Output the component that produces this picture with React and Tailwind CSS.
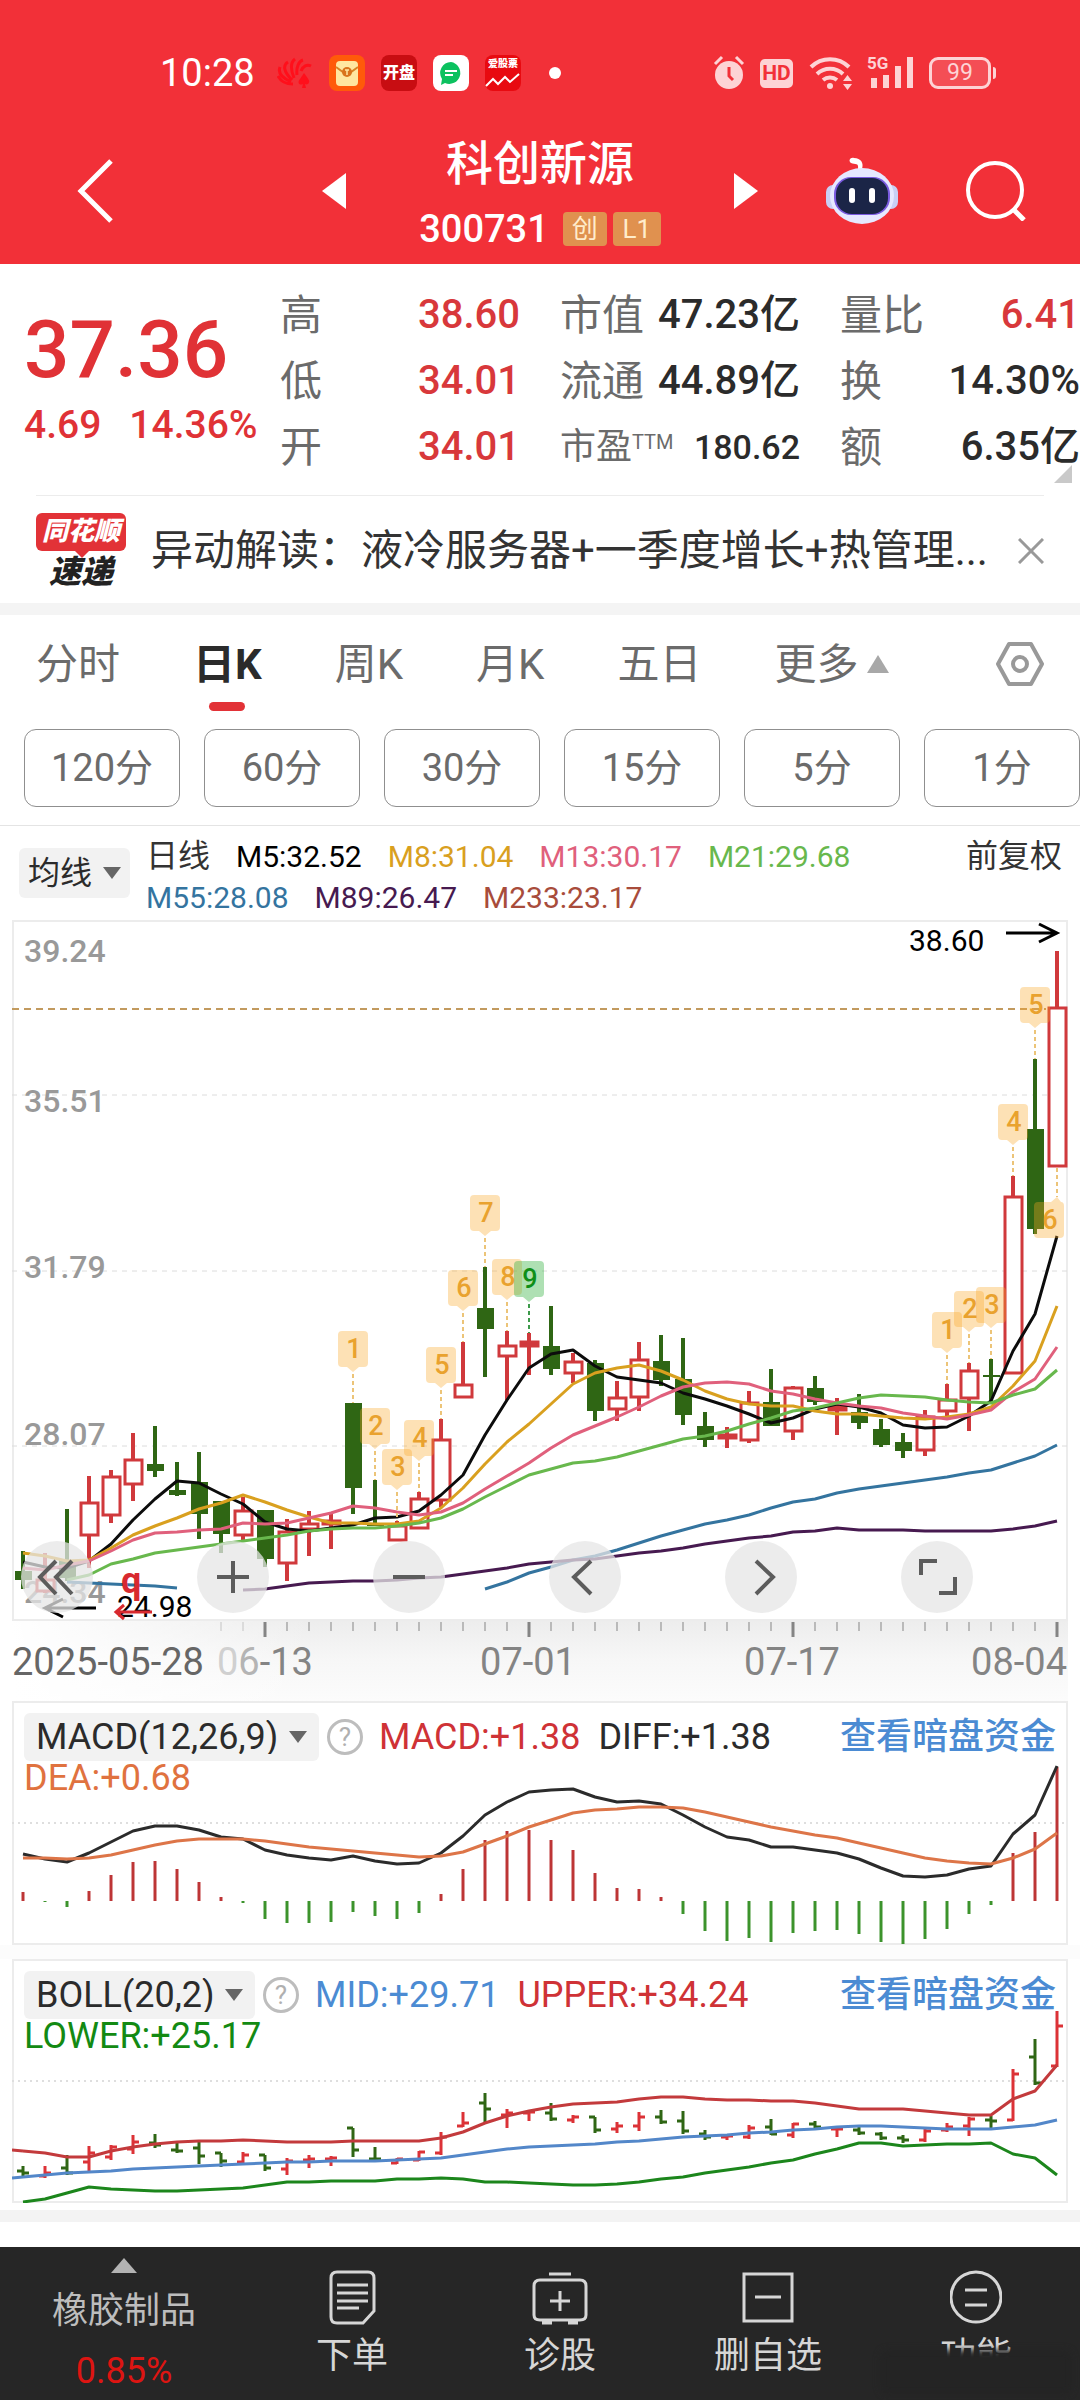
import React, { useState } from "react";

const RED = "#d0393c";
const GREEN = "#2f6614";
const STEP = 22;

const xAt = (i) => 11 + STEP * i;

// [high, body top, body bottom, low, rising]
const candles = [
  [631, 651, 660, 669, 0], [633, 660, 671, 673, 1], [589, 640, 658, 661, 0], [556, 583, 615, 648, 1],
  [550, 557, 595, 603, 1], [513, 540, 564, 581, 1], [506, 544, 551, 557, 0], [542, 570, 575, 576, 0],
  [532, 562, 594, 619, 0], [581, 581, 614, 633, 0], [577, 591, 615, 620, 1], [590, 590, 639, 647, 0],
  [599, 612, 643, 661, 1], [591, 604, 609, 636, 1], [593, 601, 604, 629, 1], [483, 483, 568, 594, 0],
  [560, 603, 606, 606, 0], [601, 606, 620, 621, 1], [572, 579, 608, 608, 1], [499, 520, 580, 587, 1],
  [422, 465, 477, 477, 1], [347, 388, 409, 457, 0], [411, 426, 436, 480, 1], [413, 422, 426, 455, 1],
  [386, 426, 449, 455, 0], [433, 442, 453, 463, 1], [440, 443, 491, 501, 0], [461, 478, 489, 501, 1],
  [422, 440, 477, 491, 1], [415, 441, 460, 466, 0], [418, 459, 495, 505, 0], [492, 506, 520, 527, 0],
  [507, 515, 518, 528, 1], [471, 483, 520, 523, 1], [449, 482, 506, 506, 0], [466, 468, 511, 520, 1],
  [456, 468, 482, 485, 0], [478, 487, 490, 515, 1], [474, 492, 503, 509, 0], [499, 509, 525, 527, 0],
  [513, 522, 531, 538, 0], [490, 497, 530, 536, 1], [464, 480, 491, 497, 1], [443, 451, 478, 511, 1],
  [439, 455, 457, 483, 0], [256, 277, 453, 453, 1], [139, 209, 309, 314, 0], [31, 88, 246, 246, 1],
];

const M5 = [642, 647, 648, 641, 624, 600, 579, 561, 563, 574, 584, 602, 609, 611, 608, 605, 598, 597, 591, 575, 555, 515, 480, 448, 434, 430, 446, 457, 460, 463, 473, 479, 486, 494, 503, 498, 489, 484, 487, 493, 505, 508, 507, 496, 481, 431, 394, 316];
const M8 = [633, 636, 641, 640, 628, 615, 606, 598, 589, 583, 575, 582, 590, 597, 603, 603, 604, 604, 601, 588, 568, 544, 522, 504, 484, 464, 453, 448, 445, 451, 460, 471, 479, 484, 486, 486, 491, 494, 494, 496, 498, 499, 497, 494, 487, 466, 441, 386];
const M13 = [648, 650, 645, 641, 631, 620, 613, 612, 610, 609, 603, 604, 603, 598, 593, 586, 588, 592, 595, 592, 583, 569, 556, 543, 528, 515, 506, 497, 487, 476, 467, 463, 462, 464, 471, 474, 479, 483, 486, 488, 493, 496, 499, 495, 490, 472, 459, 427];
const M21 = [660, 655, 644, 639, 633, 630, 627, 624, 621, 618, 615, 611, 609, 608, 608, 606, 603, 598, 589, 577, 566, 555, 549, 543, 541, 537, 531, 525, 519, 516, 511, 504, 498, 491, 488, 483, 478, 475, 476, 477, 480, 482, 483, 475, 469, 450];
const M55 = [669, 662, 653, 647, 640, 636, 630, 623, 616, 610, 604, 600, 595, 588, 582, 579, 573, 569, 566, 563, 560, 557, 553, 550, 543, 536, 525];
const M89 = [670, 669, 666, 663, 662, 661, 661, 660, 658, 657, 654, 651, 648, 644, 642, 640, 639, 636, 633, 631, 628, 624, 621, 618, 616, 612, 611, 608, 610, 610, 610, 611, 611, 611, 611, 609, 606, 601];

// [candle index, label]
const flags = [
  [15, 1], [16, 2], [17, 3], [18, 4], [19, 5], [20, 6], [21, 7], [22, 8], [23, 9],
  [42, 1], [43, 2], [44, 3], [45, 4], [46, 5],
];

const macdBars = [191, 201, 206, 190, 174, 161, 160, 168, 181, 196, 202, 218, 222, 222, 221, 211, 215, 218, 212, 193, 168, 139, 130, 129, 139, 149, 172, 187, 188, 196, 213, 230, 240, 237, 241, 232, 230, 229, 233, 241, 243, 238, 228, 213, 204, 152, 131, 66];
const DIFF = [153, 158, 161, 152, 141, 130, 125, 125, 129, 136, 138, 149, 154, 157, 159, 155, 160, 163, 162, 152, 135, 114, 101, 91, 89, 88, 96, 101, 100, 103, 114, 126, 136, 139, 146, 146, 149, 152, 158, 167, 175, 176, 174, 168, 165, 133, 114, 65];
const DEA = [157, 157, 158, 157, 154, 149, 144, 140, 138, 138, 138, 140, 143, 146, 148, 150, 152, 154, 156, 155, 151, 143, 135, 126, 119, 112, 109, 108, 106, 106, 107, 111, 116, 121, 126, 130, 134, 137, 142, 147, 152, 157, 160, 162, 163, 157, 148, 132];

const UPPER = [192, 194, 198, 198, 192, 188, 185, 183, 182, 182, 181, 182, 183, 183, 183, 182, 182, 182, 182, 179, 173, 164, 157, 152, 148, 145, 144, 143, 140, 138, 138, 140, 141, 141, 142, 142, 144, 147, 150, 150, 150, 152, 154, 156, 156, 140, 132, 106];
const MID = [218, 216, 214, 213, 212, 210, 209, 208, 207, 206, 205, 204, 203, 203, 202, 202, 202, 201, 200, 199, 196, 193, 190, 188, 187, 186, 185, 183, 182, 180, 178, 177, 176, 174, 173, 171, 170, 168, 167, 167, 168, 169, 170, 170, 170, 168, 166, 161];
const LOWER = [243, 240, 234, 228, 230, 231, 232, 232, 231, 230, 229, 226, 223, 223, 222, 222, 222, 220, 220, 219, 220, 223, 223, 224, 225, 226, 226, 225, 223, 220, 218, 214, 211, 208, 204, 201, 195, 190, 184, 184, 187, 186, 185, 185, 184, 195, 199, 216];

const Line = ({ data, from = 0, color, width = 3 }) => (
  <polyline
    points={data.map((y, i) => `${xAt(i + from)},${y}`).join(" ")}
    fill="none"
    stroke={color}
    strokeWidth={width}
    strokeLinejoin="round"
  />
);

const Triangle = ({ className, dir = "down" }) => (
  <svg viewBox="0 0 20 14" preserveAspectRatio="none" className={className} aria-hidden="true">
    <path d={dir === "down" ? "M0 0H20L10 14Z" : "M0 14H20L10 0Z"} fill="currentColor" />
  </svg>
);

const StatusBar = () => (
  <div className="flex items-center pt-[54px] pl-[160px] pr-[84px] h-[92px]">
    <span className="text-[38px] leading-10 w-[117px]">10:28</span>
    <svg viewBox="0 0 36 36" className="w-9 h-9 mr-4" fill="none" stroke="#ff0f1b" strokeWidth="3">
      <path d="M16 29C6 29 3 25 1 21M14 27C3 22 1 17 3 12M15 25C6 16 6 10 11 7M17 23C13 13 14 7 18 4M20 20C19 12 22 6 26 5M24 16C26 11 30 9 34 11" />
      <path d="M27 18C31 24 34 26 31 29C29 30 28 29 28 29L29 33H25L26 29C22 31 20 27 23 24Z" fill="#ff0f1b" stroke="none" />
    </svg>
    <svg viewBox="0 0 36 36" className="w-9 h-9 mr-4">
      <rect width="36" height="36" rx="8" fill="#ff5a0a" />
      <rect x="7" y="6" width="22" height="25" rx="4" fill="#ffe6a0" />
      <path d="M7 12L18 20L29 12" fill="none" stroke="#d98225" strokeWidth="2" />
      <circle cx="18" cy="17" r="5" fill="#d9731c" />
      <path d="M16 15H20M18 15V20" stroke="#ffe6a0" strokeWidth="1.5" />
    </svg>
    <span className="w-9 h-9 mr-4 rounded-lg bg-[#c80d12] text-[16px] leading-9 font-black text-center">开盘</span>
    <svg viewBox="0 0 36 36" className="w-9 h-9 mr-4">
      <rect width="36" height="36" rx="8" fill="#fff" />
      <path d="M18 7A11 11 0 1 1 12 28L8 30L9 24A11 11 0 0 1 18 7Z" fill="#0bc15f" />
      <path d="M12 16H24M12 20H20" stroke="#fff" strokeWidth="2" />
    </svg>
    <span className="flex flex-col items-center w-9 h-9 mr-[28px] rounded-lg bg-[#e80a10]">
      <span className="text-[10px] leading-[18px] font-black">爱股票</span>
      <svg viewBox="0 0 36 16" className="w-9 h-4" fill="none" stroke="#fff" strokeWidth="2">
        <path d="M1 13L8 6L13 11L20 4L25 9L34 1" />
      </svg>
    </span>
    <span className="w-3 h-3 rounded-full bg-white" />

    <div className="flex items-center ml-auto text-[#fdd3d5]">
      <svg viewBox="0 0 32 36" className="w-8 h-9 mr-[15px]" fill="none" stroke="currentColor" strokeWidth="3">
        <path d="M2 9L9 2M30 9L23 2" />
        <circle cx="16" cy="20" r="14" fill="currentColor" stroke="none" />
        <path d="M16 12V21L20 25" stroke="#f23038" />
      </svg>
      <span className="w-[33px] h-[29px] mr-4 rounded-[5px] bg-[#fdd3d5] text-[#f23038] text-[21px] leading-[29px] font-bold text-center">HD</span>
      <svg viewBox="0 0 46 36" className="w-[46px] h-9 mr-3" fill="none" stroke="currentColor" strokeWidth="4">
        <path d="M2 12A27 27 0 0 1 40 12M8 19A19 19 0 0 1 34 19M14 25A11 11 0 0 1 28 25" />
        <circle cx="21" cy="31" r="3" fill="currentColor" stroke="none" />
        <path d="M34 26L38.500 20L43 26ZM34 29L38.500 35L43 29Z" fill="currentColor" stroke="none" />
      </svg>
      <div className="relative w-12 h-9 mr-[14px]">
        <span className="absolute left-0 top-0 text-[17px] leading-4 font-bold">5G</span>
        <svg viewBox="0 0 48 36" className="w-12 h-9" fill="currentColor">
          <path d="M4 23h6v10H4zM16 20h6v13h-6zM28 11h6v22h-6zM40 2h6v31h-6z" />
        </svg>
      </div>
      <span className="w-[62px] h-8 rounded-[9px] border-[3px] border-[#fdd3d5] bg-white/15 text-[23px] leading-[26px] text-center">99</span>
      <span className="w-[3px] h-3 ml-[2px] rounded-r bg-[#fdd3d5]" />
    </div>
  </div>
);

const Robot = () => (
  <svg viewBox="0 0 72 68" className="w-[72px] h-[68px]">
    <path d="M32 12C33 5 29 8 25 6C22 4 24 0 28 1C35 1 38 6 36 12Z" fill="#fff" />
    <rect x="0" y="28" width="14" height="24" rx="7" fill="#c9cff5" />
    <rect x="58" y="28" width="14" height="24" rx="7" fill="#c9cff5" />
    <ellipse cx="36" cy="39" rx="32" ry="28" fill="#e6e8ff" />
    <rect x="8" y="20" width="56" height="38" rx="17" fill="#7a5be0" />
    <rect x="10" y="21" width="52" height="36" rx="16" fill="#1b2547" />
    <rect x="23" y="31" width="6" height="15" rx="3" fill="#fff" />
    <rect x="43" y="31" width="6" height="15" rx="3" fill="#fff" />
  </svg>
);

const Header = () => (
  <header className="bg-[#f23038] text-white">
    <StatusBar />
    <div className="flex items-center gap-[68px] pt-[42px] pb-[17px] pl-[77px] pr-[54px]">
      <button aria-label="返回">
        <svg viewBox="0 0 36 64" className="w-9 h-16" fill="none" stroke="currentColor" strokeWidth="5">
          <path d="M34 2L4 32L34 62" />
        </svg>
      </button>
      <div className="flex items-center gap-[74px] ml-auto">
        <button aria-label="上一只">
          <svg viewBox="0 0 24 36" className="w-6 h-9"><path d="M24 0V36L0 18Z" fill="currentColor" /></svg>
        </button>
        <div className="flex flex-col items-center w-60">
          <h1 className="text-[47px] leading-[60px] font-medium whitespace-nowrap">科创新源</h1>
          <div className="flex items-center gap-[6px] mt-[17px] h-9">
            <span className="text-[38px] leading-9 mr-2 font-medium">300731</span>
            <span className="w-11 h-[34px] rounded bg-[#e0914f] text-[#ffeccb] text-[26px] leading-[34px] text-center">创</span>
            <span className="w-12 h-[34px] rounded bg-[#e0914f] text-[#ffeccb] text-[26px] leading-[34px] text-center">L1</span>
          </div>
        </div>
        <button aria-label="下一只">
          <svg viewBox="0 0 24 36" className="w-6 h-9"><path d="M0 0V36L24 18Z" fill="currentColor" /></svg>
        </button>
      </div>
      <button aria-label="智能助手"><Robot /></button>
      <button aria-label="搜索">
        <svg viewBox="0 0 60 60" className="w-[60px] h-[60px]" fill="none" stroke="currentColor" strokeWidth="4">
          <circle cx="29" cy="29" r="27" />
          <path d="M47 48L58 59" strokeWidth="5" />
        </svg>
      </button>
    </div>
  </header>
);

const Stat = ({ label, sup, value, tone = "text-[#2b2b2b]", small }) => (
  <div className="flex items-center justify-between h-[66px] whitespace-nowrap">
    <dt className={`${small ? "text-[36px]" : "text-[42px]"} text-[#6b6b6b] flex`}>
      {label}
      {sup && <sup className="text-[20px] leading-8 top-0 self-start mt-[6px]">{sup}</sup>}
    </dt>
    <dd className={`${small ? "text-[34px]" : "text-[40px]"} font-medium ${tone}`}>{value}</dd>
  </div>
);

const Quote = () => (
  <section className="relative flex gap-10 pt-[18px] pb-[15px]">
    <div className="w-60 pl-6 text-[#e03236] whitespace-nowrap">
      <div className="text-[80px] leading-[80px] mt-7 font-medium">37.36</div>
      <div className="flex gap-7 text-[39px] leading-[60px] mt-[5px] font-medium">
        <span>4.69</span>
        <span>14.36%</span>
      </div>
    </div>
    <dl className="flex-1">
      <Stat label="高" value="38.60" tone="text-[#d8383b]" />
      <Stat label="低" value="34.01" tone="text-[#d8383b]" />
      <Stat label="开" value="34.01" tone="text-[#d8383b]" />
    </dl>
    <dl className="flex-1">
      <Stat label="市值" value="47.23亿" />
      <Stat label="流通" value="44.89亿" />
      <Stat label="市盈" sup="TTM" value="180.62" small />
    </dl>
    <dl className="flex-1">
      <Stat label="量比" value="6.41" tone="text-[#d8383b]" />
      <Stat label="换" value="14.30%" />
      <Stat label="额" value="6.35亿" />
    </dl>
    <svg viewBox="0 0 18 18" className="absolute right-2 bottom-3 w-[18px] h-[18px]">
      <path d="M18 0V18H0Z" fill="#c9c9c9" />
    </svg>
  </section>
);

const News = () => (
  <section className="flex items-center h-[108px] mx-9 pt-[2px] border-t border-[#ececec]">
    <div className="w-[90px] mr-[25px] text-center italic font-black">
      <div className="relative h-[38px] rounded-md bg-[#e23237] text-white text-[26px] leading-[36px]">
        同花顺
        <Triangle className="absolute left-[38px] -bottom-[7px] w-4 h-2 text-[#e23237]" />
      </div>
      <div className="text-[32px] leading-8 mt-[5px] text-[#222]">速递</div>
    </div>
    <a href="#news" className="flex-1 min-w-0 text-[42px] leading-[60px] text-[#333] whitespace-nowrap overflow-hidden">
      异动解读：液冷服务器+一季度增长+热管理...
    </a>
    <button aria-label="关闭" className="text-[#999]">
      <svg viewBox="0 0 26 26" className="w-[26px] h-[26px]" stroke="currentColor" strokeWidth="3">
        <path d="M1 1L25 25M25 1L1 25" />
      </svg>
    </button>
  </section>
);

const tabs = ["分时", "日K", "周K", "月K", "五日"];
const minutes = ["120分", "60分", "30分", "15分", "5分", "1分"];

const Periods = () => {
  const [active, setActive] = useState("日K");

  return (
    <section className="border-t-[12px] border-[#f4f4f4]">
      <div className="flex items-center h-[98px] gap-[73px] px-9 text-[42px] text-[#6b6b6b] whitespace-nowrap">
        {tabs.map((t) => (
          <button
            key={t}
            onClick={() => setActive(t)}
            className={`relative h-full ${t === active ? "font-bold text-[#2b2b2b]" : ""}`}
          >
            {t}
            {t === active && (
              <span className="absolute left-1/2 -translate-x-1/2 bottom-[2px] w-9 h-[9px] rounded-full bg-[#e23237]" />
            )}
          </button>
        ))}
        <button className="flex items-center gap-[9px]">
          更多
          <Triangle dir="up" className="w-[22px] h-[18px] text-[#a8a8a8]" />
        </button>
        <button aria-label="设置" className="ml-auto text-[#999]">
          <svg viewBox="0 0 48 46" className="w-12 h-[46px]" fill="none" stroke="currentColor" strokeWidth="4" strokeLinejoin="round">
            <path d="M13 3H35L46 23L35 43H13L2 23Z" />
            <circle cx="24" cy="23" r="7" />
          </svg>
        </button>
      </div>
      <div className="flex gap-6 pt-4 pb-[18px] pl-6 border-b border-[#e4e4e4]">
        {minutes.map((m) => (
          <button key={m} className="flex-1 h-[78px] rounded-xl border border-[#8f8f8f] text-[38px] text-[#6b6b6b]">
            {m}
          </button>
        ))}
      </div>
    </section>
  );
};

const Picker = ({ name, value, className }) => (
  <label className={`flex items-center bg-[#f2f2f2] rounded-md text-[#2b2b2b] whitespace-nowrap ${className}`}>
    <select aria-label={name} className="appearance-none bg-transparent outline-none">
      <option>{value}</option>
    </select>
    <Triangle className="w-[18px] h-3 ml-[10px] text-[#666]" />
  </label>
);

const Legend = () => (
  <div className="flex items-start gap-4 pt-[10px] pb-[2px] pl-[19px] pr-[18px] whitespace-nowrap">
    <Picker name="主图指标" value="均线" className="h-[50px] mt-3 px-[9px] text-[32px]" />
    <div className="flex-1 text-[30px] leading-[41px]">
      <div className="flex gap-[26px]">
        <span className="text-[32px] text-[#333]">日线</span>
        <span className="text-black">M5:32.52</span>
        <span className="text-[#d9a01f]">M8:31.04</span>
        <span className="text-[#e0607c]">M13:30.17</span>
        <span className="text-[#68b84d]">M21:29.68</span>
        <button className="ml-auto text-[32px] text-[#333]">前复权</button>
      </div>
      <div className="flex gap-[26px]">
        <span className="text-[#34749f]">M55:28.08</span>
        <span className="text-[#471a50]">M89:26.47</span>
        <span className="text-[#a84c3b]">M233:23.17</span>
      </div>
    </div>
  </div>
);

const Candle = ({ i, c: [high, top, bottom, low, up] }) => {
  const x = xAt(i);
  const color = up ? RED : GREEN;
  return (
    <g stroke={color} strokeWidth="4">
      <path d={`M${x} ${high}V${top}M${x} ${bottom}V${low}`} />
      {up ? (
        <rect x={x - 8} y={top} width="17" height={bottom - top} fill={bottom - top < 5 ? color : "#fff"} strokeWidth="3" />
      ) : (
        <rect x={x - 8} y={top} width="17" height={bottom - top} fill={color} stroke="none" />
      )}
    </g>
  );
};

const Flag = ({ i, n }) => {
  const x = xAt(i);
  const y = candles[i][0] - 72;
  const green = n === 9;
  return (
    <g>
      <path d={`M${x} ${y + 43}V${y + 72}`} stroke={green ? "#3d9a4a" : "#ecc478"} strokeWidth="2" strokeDasharray="4 3" />
      <path
        d={`M${x - 11} ${y}h22q4 0 4 4v28q0 4 -4 4h-5l-6 5l-6 -5h-5q-4 0 -4 -4v-28q0 -4 4 -4Z`}
        fill={green ? "#3db54a" : "#f9a825"}
        fillOpacity={green ? 0.42 : 0.34}
      />
      <text x={x + 1} y={y + 27} textAnchor="middle" fontSize="27" fontWeight="500" fill={green ? "#0f8f17" : "#e9a22e"}>
        {n}
      </text>
    </g>
  );
};

const PriceChart = () => (
  <svg viewBox="0 0 1056 781" className="w-full">
    <defs>
      <linearGradient id="axis" x1="0" y1="0" x2="0" y2="1">
        <stop offset="0" stopColor="#ededed" />
        <stop offset="0.5" stopColor="#f7f7f7" />
        <stop offset="1" stopColor="#fcfcfc" />
      </linearGradient>
      <linearGradient id="axisFade" x1="0" y1="0" x2="1" y2="0">
        <stop offset="0" stopColor="#fff" />
        <stop offset="1" stopColor="#fff" stopOpacity="0" />
      </linearGradient>
    </defs>
    <rect y="701" width="1056" height="80" fill="url(#axis)" />
    <rect y="701" width="300" height="80" fill="url(#axisFade)" />
    <rect x="1" y="1" width="1054" height="699" fill="#fff" stroke="#ececec" strokeWidth="2" />
    <path d="M0 175H1056M0 351H1056M0 526H1056" stroke="#dcdcdc" strokeWidth="1" strokeDasharray="5 5" />
    <g fontSize="32" fontWeight="500" fill="#999">
      <text x="12" y="42">39.24</text>
      <text x="12" y="192">35.51</text>
      <text x="12" y="358">31.79</text>
      <text x="12" y="525">28.07</text>
      <text x="12" y="683">24.34</text>
    </g>
    <path d="M0 89H1034" stroke="#c29a5e" strokeWidth="2" strokeDasharray="7 5" />

    {candles.map((c, i) => (
      <Candle key={i} i={i} c={c} />
    ))}
    <Line data={M5} color="#0c0c0c" />
    <Line data={M8} color="#d9a01f" />
    <Line data={M13} color="#e0607c" />
    <Line data={M21} from={2} color="#68b84d" />
    <Line data={[662, 663, 664, 665, 666, 668]} from={2} color="#34749f" />
    <Line data={M55} from={21} color="#34749f" />
    <Line data={M89} from={10} color="#471a50" />

    {flags.map(([i, n]) => (
      <Flag key={i} i={i} n={n} />
    ))}
    <path d="M1045 248V277" stroke="#ecc478" strokeWidth="2" strokeDasharray="4 3" />
    <path d="M1026 282h13l6 -5l4 5q3 0 3 4v28q0 4 -4 4h-22q-4 0 -4 -4v-28q0 -4 4 -4Z" fill="#f9a825" fillOpacity="0.34" />
    <text x="1038" y="309" textAnchor="middle" fontSize="27" fontWeight="500" fill="#e9a22e">6</text>

    {/* high / low markers */}
    <text x="897" y="31" fontSize="30" fill="#000">38.60</text>
    <path d="M994 13H1044M1027 4L1045 13L1027 22" fill="none" stroke="#000" strokeWidth="3" />
    <text x="105" y="697" fontSize="30" fill="#000">24.98</text>
    <path d="M84 688H34M51 679L33 688L51 697" fill="none" stroke="#000" strokeWidth="3" />
    <text x="109" y="673" fontSize="36" fontWeight="700" fill="#d8292f">q</text>
    <path d="M140 692H104M112 685L104 692L112 699" fill="none" stroke="#d8292f" strokeWidth="3" />

    {/* time axis */}
    {Array.from({ length: 39 }, (_, k) => k + 9).map((i) => {
      const major = i % 12 === 11;
      return (
        <path
          key={i}
          d={`M${xAt(i)} 702v${major ? 15 : 9}`}
          stroke={i < 11 ? "#c4c4c4" : "#858585"}
          strokeWidth={major ? 3 : 1}
        />
      );
    })}
    <g fontSize="38" fill="#848484" textAnchor="middle">
      <text x="0" y="755" textAnchor="start" fill="#666">2025-05-28</text>
      <text x="205" y="755" textAnchor="start">
        <tspan fill="#d0d0d0">0</tspan>
        <tspan fill="#b4b4b4">6</tspan>
        -13
      </text>
      <text x="516" y="755">07-01</text>
      <text x="780" y="755">07-17</text>
      <text x="1055" y="755" textAnchor="end">08-04</text>
    </g>
  </svg>
);

const tools = [
  ["向左翻页", "M35 20L19 36L35 53M51 20L35 36L51 53"],
  ["放大", "M36 20V52M20 36H52"],
  ["缩小", "M20 36H52"],
  ["左移", "M42 20L25 36L42 53"],
  ["右移", "M31 20L48 36L31 53"],
  ["全屏", "M20 34V20H36M38 52H54V36"],
];

const ChartTools = () => (
  <div className="absolute inset-x-0 bottom-[88px] grid grid-cols-6 pl-[9px] -mr-[9px]">
    {tools.map(([label, d]) => (
      <button key={label} aria-label={label} className="w-[72px] h-[72px] rounded-full bg-[#e6e6e6]/75">
        <svg viewBox="0 0 72 72" className="w-full h-full" fill="none" stroke="#5c5c5c" strokeWidth="4">
          <path d={d} />
        </svg>
      </button>
    ))}
  </div>
);

const Panel = ({ name, title, first, second, third, children }) => (
  <section className="relative mx-3">
    <svg viewBox="0 0 1056 244" className="w-full">
      <rect x="1" y="1" width="1054" height="242" fill="#fff" stroke="#ececec" strokeWidth="2" />
      <path d="M0 122H1056" stroke="#dedede" strokeWidth="2" strokeDasharray="2 4" />
      {children}
    </svg>
    <div className="absolute inset-x-3 top-3 text-[36px] leading-[34px] whitespace-nowrap">
      <div className="flex items-center h-12">
        <Picker name={name} value={title} className="h-12 px-3" />
        <button aria-label="说明" className="w-9 h-9 ml-2 mr-4 rounded-full border-[3px] border-[#bdbdbd] text-[#b0b0b0] text-[26px] leading-7">
          ?
        </button>
        <span className={`mr-[18px] ${first[1]}`}>{first[0]}</span>
        <span className={second[1]}>{second[0]}</span>
        <a href="#fund" className="ml-auto text-[#4b8bd3] font-medium">查看暗盘资金</a>
      </div>
      <div className={third[1]}>{third[0]}</div>
    </div>
  </section>
);

const Macd = () => (
  <Panel
    name="副图指标一"
    title="MACD(12,26,9)"
    first={["MACD:+1.38", "text-[#cf3236]"]}
    second={["DIFF:+1.38", "text-[#2b2b2b]"]}
    third={["DEA:+0.68", "text-[#e0723f]"]}
  >
    {macdBars.map((y, i) => (
      <path key={i} d={`M${xAt(i)} 200V${y}`} stroke={y < 200 ? "#bd3536" : "#3c932c"} strokeWidth="3" />
    ))}
    <Line data={DIFF} color="#2b2b2b" />
    <Line data={DEA} color="#dd7548" />
  </Panel>
);

const bollY = (v) => Math.round(44 + v * 0.258);

const Boll = () => (
  <Panel
    name="副图指标二"
    title="BOLL(20,2)"
    first={["MID:+29.71", "text-[#4b8bd3]"]}
    second={["UPPER:+34.24", "text-[#cf3236]"]}
    third={["LOWER:+25.17", "text-[#138a13]"]}
  >
    {candles.map(([high, top, bottom, low, up], i) => {
      const x = xAt(i);
      const open = bollY(up ? bottom : top);
      const close = bollY(up ? top : bottom);
      return (
        <path
          key={i}
          d={`M${x} ${bollY(high)}V${bollY(low) + 1}M${x - 6} ${open}H${x}M${x} ${close}H${x + 6}`}
          stroke={up ? "#dc3237" : GREEN}
          strokeWidth="3"
          fill="none"
        />
      );
    })}
    <Line data={UPPER} color="#c33a3c" />
    <Line data={MID} color="#5387c9" />
    <Line data={LOWER} color="#1c861c" />
    <path d="M0 191L11 192" stroke="#c33a3c" strokeWidth="3" />
    <path d="M0 219L11 218" stroke="#5387c9" strokeWidth="3" />
  </Panel>
);

const navItems = [
  ["下单", <path key="i" d="M9 2H40Q46 2 46 8V41L35 53H9Q3 53 3 47V8Q3 2 9 2ZM9 15H40M9 23H40M9 31H40M9 38H31" />],
  ["诊股", <path key="i" d="M17 4H39M8 10H48Q54 10 54 16V45Q54 50 48 50H8Q2 50 2 45V16Q2 10 8 10ZM28 21V41M18 31H38M10 53H20M36 53H46" />],
  ["删自选", <path key="i" d="M2 4H50V51H2ZM13 27H39" />],
  ["功能", <path key="i" d="M26 2A25 25 0 1 1 25.900 2ZM15 20H37M15 35H37" />],
];

const BottomNav = () => (
  <nav className="flex bg-[#262626] text-[#d6d6d6] whitespace-nowrap">
    <a href="#sector" className="flex flex-col items-center w-[248px] pt-[11px] pb-[5px] text-[36px] leading-[48px]">
      <Triangle dir="up" className="w-[26px] h-[15px] text-[#b3b3b3]" />
      <span className="mt-[14px] text-[#bdbdbd]">橡胶制品</span>
      <span className="mt-3 text-[#dd1512]">0.85%</span>
    </a>
    {navItems.map(([label, icon]) => (
      <button key={label} className="relative flex flex-1 flex-col items-center pt-[23px] pb-5 text-[36px] leading-[48px]">
        <svg viewBox={label === "诊股" ? "0 0 56 55" : label === "下单" ? "0 0 49 55" : "0 0 52 55"} className="h-[55px] mb-[7px]" fill="none" stroke="currentColor" strokeWidth="3">
          {icon}
        </svg>
        {label}
        {label === "功能" && (
          <span className="absolute left-2 right-2 bottom-[6px] h-11 rounded-lg bg-[#242424] blur-[3px]" />
        )}
      </button>
    ))}
  </nav>
);

export default function App() {
  return (
    <main className="bg-white font-['Roboto','Noto_Sans_CJK_SC',sans-serif] overflow-x-hidden">
      <Header />
      <Quote />
      <News />
      <Periods />
      <Legend />
      <section className="relative mx-3">
        <PriceChart />
        <ChartTools />
      </section>
      <Macd />
      <div className="h-[14px] bg-[#fcfcfc]" />
      <Boll />
      <div className="h-3 mt-[7px] mb-[25px] bg-[#f3f3f3]" />
      <BottomNav />
    </main>
  );
}
